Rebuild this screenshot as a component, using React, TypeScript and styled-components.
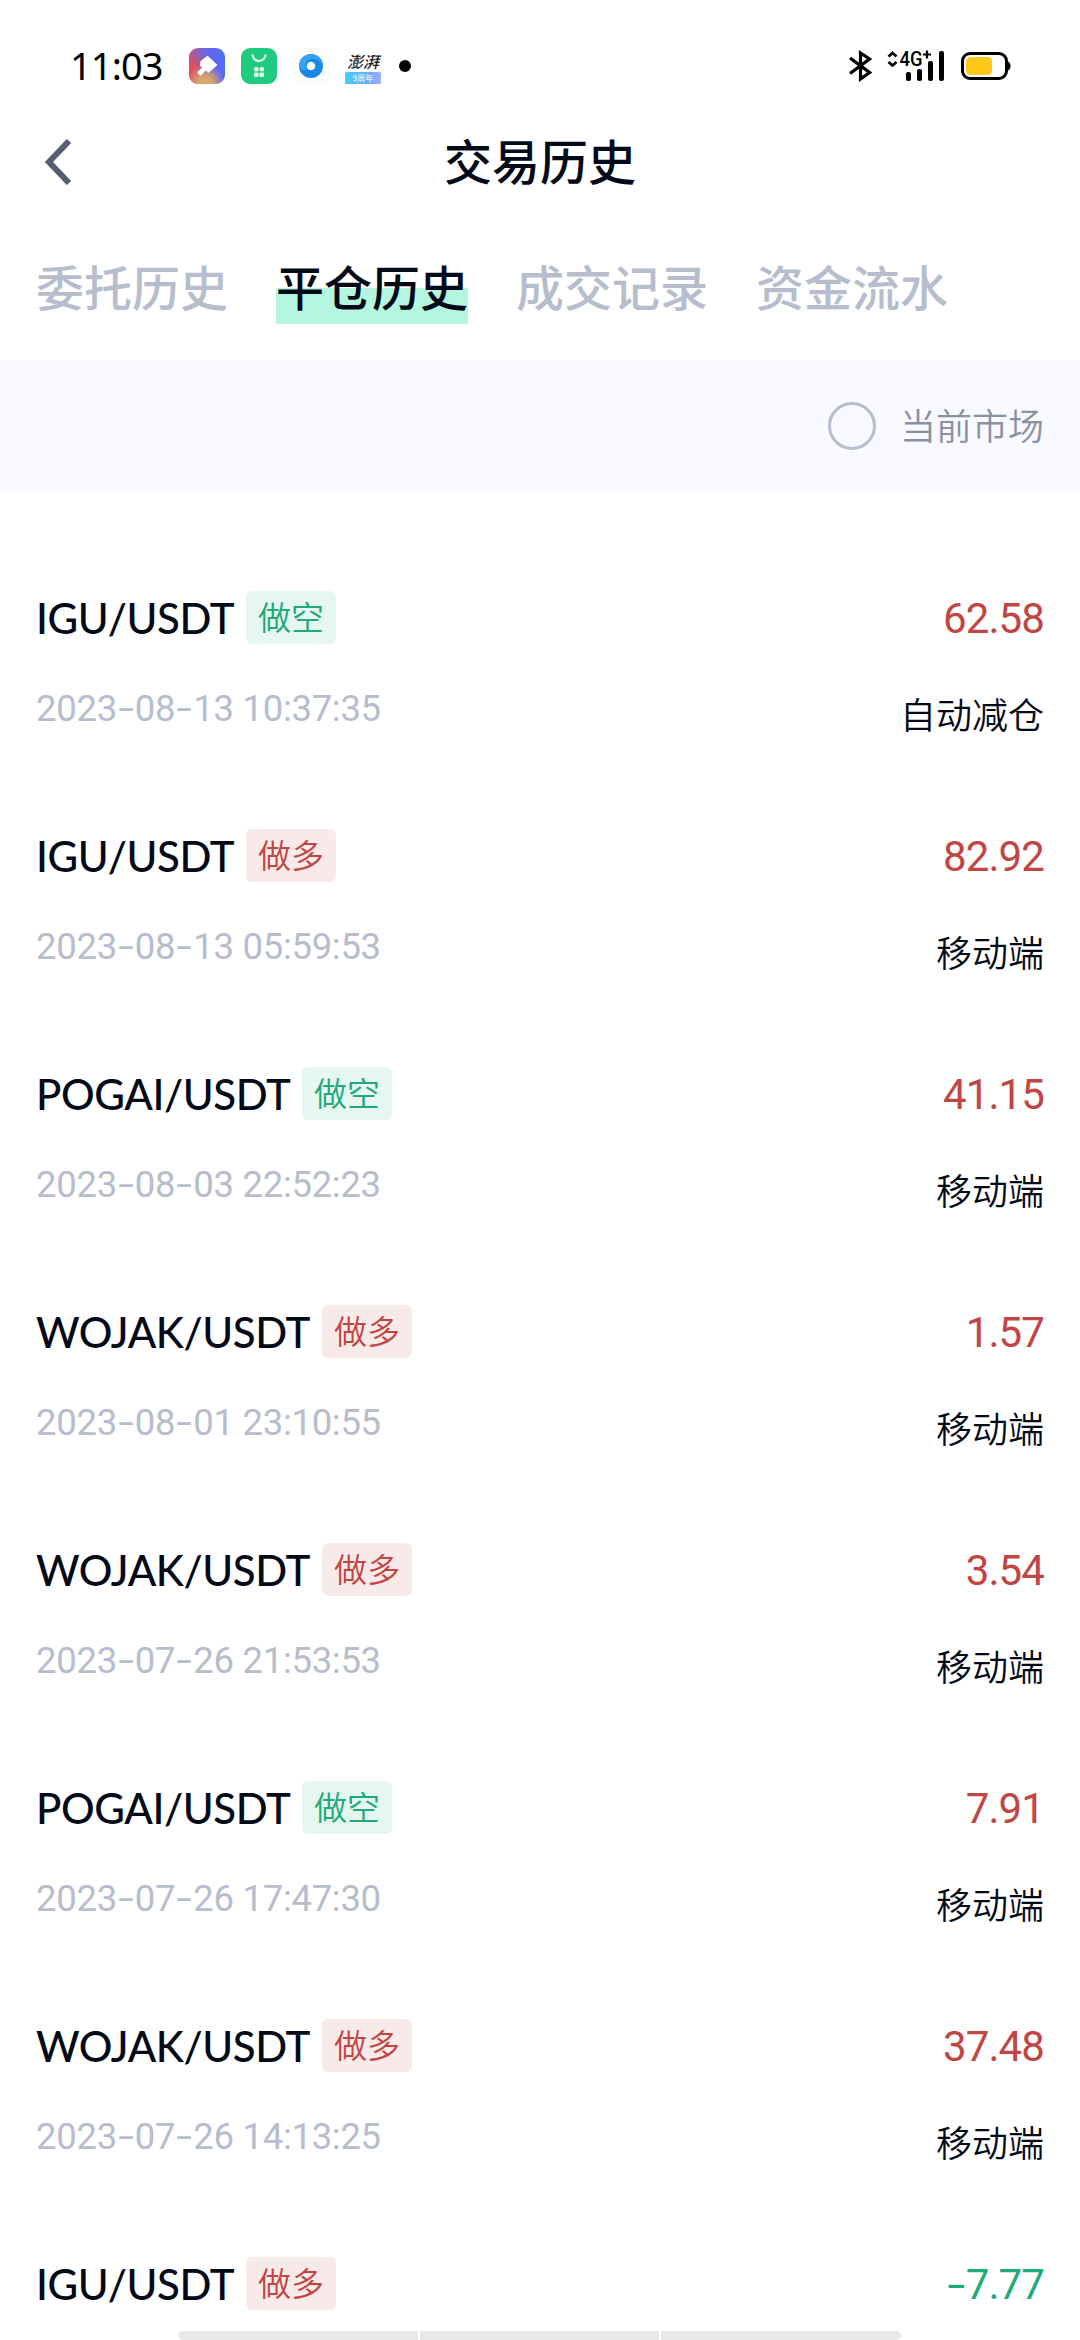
import React from "react";
import styled, { createGlobalStyle } from "styled-components";

const cjk = `"Noto Sans CJK SC", sans-serif`;

const GlobalStyle = createGlobalStyle`
  *, *::before, *::after { box-sizing: border-box; }
  html, body { margin: 0; background: #fff; }
  body { overflow: hidden; }
`;

const Screen = styled.div`
  position: relative;
  width: 1080px;
  height: 2340px;
  overflow: hidden;
  display: flex;
  flex-direction: column;
  background: #fff;
  color: #050a18;
  font-family: ${cjk};
`;

const StatusBar = styled.header`
  flex: none;
  display: flex;
  align-items: center;
  justify-content: space-between;
  height: 108px;
  padding: 24px 69px 0 70px;
`;

const StatusGroup = styled.div<{ $gap: number }>`
  display: flex;
  align-items: center;
  gap: ${(p) => p.$gap}px;
`;

const Clock = styled.span`
  width: 103px;
  padding-bottom: 3px;
  font: 400 38px/44px "Noto Sans", sans-serif;
  letter-spacing: -0.9px;
  color: #000;
  white-space: nowrap;
`;

const Dot = styled.span`
  width: 12px;
  height: 12px;
  margin-left: 2px;
  border-radius: 50%;
  background: #000;
`;

const PaperIcon = styled.span`
  display: flex;
  flex-direction: column;
  width: 36px;
  height: 36px;
  font-family: ${cjk};
  text-align: center;
`;

const PaperName = styled.span`
  height: 24px;
  font: italic 500 16px/27px ${cjk};
  color: #222;
  white-space: nowrap;
`;

const PaperBadge = styled.span`
  height: 12px;
  border-radius: 2px 2px 0 0;
  font-size: 8px;
  line-height: 12px;
  color: #fff;
  background: linear-gradient(100deg, #42d0f6, #67aef8 60%, #a5b0f8);
`;

const NavBar = styled.nav`
  flex: none;
  display: grid;
  grid-template-columns: 100px 1fr 100px;
  align-items: center;
  height: 108px;
`;

const BackButton = styled.button`
  display: flex;
  padding: 0 0 0 44px;
  border: 0;
  background: none;
`;

const Title = styled.h1`
  margin: 0;
  padding-bottom: 6px;
  font-size: 48px;
  font-weight: 500;
  line-height: 72px;
  text-align: center;
`;

const Tabs = styled.div`
  flex: none;
  display: flex;
  gap: 48px;
  height: 144px;
  padding: 36px 36px 0;
`;

const Tab = styled.span<{ $active?: boolean }>`
  height: 72px;
  font-size: 48px;
  font-weight: 500;
  line-height: 66px;
  color: ${(p) => (p.$active ? "#050a18" : "#b7bdcc")};
  background: ${(p) => (p.$active ? "linear-gradient(#b5f6e0, #b5f6e0) 0 100% / 100% 36px no-repeat" : "none")};
`;

const FilterBar = styled.div`
  flex: none;
  display: flex;
  align-items: center;
  justify-content: flex-end;
  gap: 24px;
  height: 132px;
  padding-right: 36px;
  background: #f8faff;
`;

const FilterLabel = styled.span`
  padding-bottom: 5px;
  color: #8b90a3;
  font-size: 36px;
  font-weight: 350;
  line-height: 54px;
`;

const Radio = styled.span`
  width: 48px;
  height: 48px;
  border: 3px solid #b7bdcc;
  border-radius: 50%;
`;

const List = styled.main`
  flex: 1;
  min-height: 0;
  padding: 99px 36px 0;
  overflow: hidden;
`;

const Row = styled.article`
  display: flex;
  flex-direction: column;
  height: 238px;
`;

const Line = styled.div<{ $height: number }>`
  display: flex;
  align-items: center;
  justify-content: space-between;
  height: ${(p) => p.$height}px;
`;

const PairGroup = styled.div`
  display: flex;
  align-items: center;
`;

const Pair = styled.span<{ $width: number }>`
  width: ${(p) => p.$width}px;
  margin-right: 12px;
  padding-top: 2px;
  font: 500 42px/53px Lato, sans-serif;
  letter-spacing: -0.4px;
  white-space: nowrap;
`;

const Tag = styled.span<{ $long: boolean }>`
  height: 53px;
  padding: 0 12px;
  border-radius: 6px;
  font-size: 33px;
  font-weight: 350;
  line-height: 51px;
  color: ${(p) => (p.$long ? "#c14543" : "#20a97b")};
  background: ${(p) => (p.$long ? "#f9eaea" : "#e6f6f1")};
`;

const Amount = styled.span<{ $loss: boolean }>`
  padding-top: 1px;
  font: 400 42px/53px Roboto, sans-serif;
  letter-spacing: -0.9px;
  color: ${(p) => (p.$loss ? "#20a97b" : "#c14543")};
`;

const Time = styled.time`
  font: 400 36.5px/44px Roboto, sans-serif;
  letter-spacing: -0.3px;
  color: #b7bdcc;
  white-space: pre;
`;

const Dash = styled.span<{ $width: number }>`
  display: inline-block;
  width: ${(p) => p.$width}px;
  letter-spacing: 0;
  text-align: center;
  transform: scaleX(1.55);
`;

const Source = styled.span`
  padding-top: 8px;
  font-size: 36px;
  font-weight: 350;
  line-height: 54px;
`;

const GestureBar = styled.div`
  position: absolute;
  left: 178px;
  bottom: 0;
  display: flex;
  gap: 2px;
  width: 723px;
  height: 9px;
  border-radius: 5px;
  overflow: hidden;
`;

const GestureSegment = styled.span`
  flex: 1;
  background: #e8e8e8;
`;

type Trade = { pair: string; long: boolean; amount: string; time: string; source: string };

const trades: Trade[] = [
  { pair: "IGU/USDT", long: false, amount: "62.58", time: "2023-08-13 10:37:35", source: "自动减仓" },
  { pair: "IGU/USDT", long: true, amount: "82.92", time: "2023-08-13 05:59:53", source: "移动端" },
  { pair: "POGAI/USDT", long: false, amount: "41.15", time: "2023-08-03 22:52:23", source: "移动端" },
  { pair: "WOJAK/USDT", long: true, amount: "1.57", time: "2023-08-01 23:10:55", source: "移动端" },
  { pair: "WOJAK/USDT", long: true, amount: "3.54", time: "2023-07-26 21:53:53", source: "移动端" },
  { pair: "POGAI/USDT", long: false, amount: "7.91", time: "2023-07-26 17:47:30", source: "移动端" },
  { pair: "WOJAK/USDT", long: true, amount: "37.48", time: "2023-07-26 14:13:25", source: "移动端" },
  { pair: "IGU/USDT", long: true, amount: "-7.77", time: "", source: "" },
];

const pairWidths: Record<string, number> = {
  "IGU/USDT": 198,
  "POGAI/USDT": 254,
  "WOJAK/USDT": 274,
};

const withDashes = (text: string, width: number) =>
  text.split("-").map((part, i) => (
    <React.Fragment key={i}>
      {i > 0 && <Dash $width={width}>-</Dash>}
      {part}
    </React.Fragment>
  ));

const ThemeAppIcon = () => (
  <svg width="36" height="36" viewBox="0 0 36 36">
    <defs>
      <linearGradient id="th" x1="0" y1="0.3" x2="1" y2="0.2">
        <stop offset="0" stopColor="#b8588c" />
        <stop offset="0.5" stopColor="#6a66e8" />
        <stop offset="1" stopColor="#4f6cf8" />
      </linearGradient>
      <radialGradient id="thr" cx="0.05" cy="0.6" r="0.5">
        <stop offset="0" stopColor="#ee4a4a" />
        <stop offset="1" stopColor="#ee4a4a" stopOpacity="0" />
      </radialGradient>
      <radialGradient id="thy" cx="0.45" cy="1" r="0.55">
        <stop offset="0" stopColor="#dcb163" />
        <stop offset="0.4" stopColor="#d8a070" />
        <stop offset="1" stopColor="#d8a070" stopOpacity="0" />
      </radialGradient>
    </defs>
    <rect width="36" height="36" rx="9" fill="url(#th)" />
    <rect width="36" height="36" rx="9" fill="url(#thr)" />
    <rect width="36" height="36" rx="9" fill="url(#thy)" />
    <path d="M18.500 8.500L27.500 17L19.500 24L16.800 21.500L11.500 27L9 24.500L14 19.500L11.500 17.500L12 13.500Z" fill="#fff" stroke="#fff" strokeWidth="1.200" strokeLinejoin="round" />
  </svg>
);

const MarketAppIcon = () => (
  <svg width="36" height="36" viewBox="0 0 36 36">
    <rect width="36" height="36" rx="9" fill="#1fcb7f" />
    <path d="M11.500 6.500a6.500 6.500 0 0 0 13 0" fill="none" stroke="#e9fff4" strokeWidth="2.200" />
    <g fill="#e0fbee">
      <rect x="13" y="19" width="4.600" height="4.600" rx="1.800" />
      <rect x="18.500" y="19" width="4.600" height="4.600" rx="1.800" />
      <rect x="13" y="24.400" width="4.600" height="4.600" rx="1.200" />
      <rect x="18.500" y="24.400" width="4.600" height="4.600" rx="1.200" />
    </g>
  </svg>
);

const BrowserAppIcon = () => (
  <svg width="36" height="36" viewBox="0 0 36 36">
    <rect x="0.500" y="0.500" width="35" height="35" rx="8" fill="#fcfcfc" stroke="#f7f7f7" />
    <circle cx="18" cy="18" r="12" fill="#1787e8" />
    <path d="M6 18a12 12 0 0 1 24 0c-2-5-7-8-12-7s-7 6-4 11c-4 1-7-1-8-4z" fill="#3aa2f2" />
    <circle cx="18" cy="18" r="4.300" fill="#fff" />
  </svg>
);

const BluetoothIcon = () => (
  <svg width="24" height="32" viewBox="0 0 24 32" fill="none" stroke="#000" strokeWidth="3.200">
    <path d="M2 8L21.500 22.500L12.500 29V3L21.500 9L2 23.500" />
  </svg>
);

const SignalIcon = () => (
  <svg width="58" height="44" viewBox="0 -6 58 44">
    <path d="M1.500 6.500L5.500 3L9.500 6.500M1.500 12L5.500 15.500L9.500 12" fill="none" stroke="#000" strokeWidth="2.800" />
    <text x="12.500" y="16" fontFamily="Roboto, sans-serif" fontSize="20" fontWeight="500" textLength="23" lengthAdjust="spacingAndGlyphs">4G</text>
    <path d="M36 4.500h8M40 0.500v8" stroke="#000" strokeWidth="2.200" />
    <rect x="19" y="22" width="5" height="9" rx="2" />
    <rect x="30" y="19" width="5" height="12" rx="2" />
    <rect x="41" y="11" width="5" height="20" rx="2" />
    <rect x="52" y="1" width="5" height="30" rx="2" />
  </svg>
);

const BatteryIcon = () => (
  <svg width="51" height="30" viewBox="0 0 51 30">
    <rect x="2.500" y="2.500" width="44" height="25" rx="7.500" fill="#fff" stroke="#000" strokeWidth="3" />
    <path d="M47 10q3.500 1 3.500 5t-3.500 5z" />
    <rect x="6" y="6" width="26" height="18" rx="4.500" fill="#ffc91c" />
  </svg>
);

export default function App() {
  return (
    <Screen>
      <GlobalStyle />
      <StatusBar>
        <StatusGroup $gap={16}>
          <Clock>11:03</Clock>
          <ThemeAppIcon />
          <MarketAppIcon />
          <BrowserAppIcon />
          <PaperIcon>
            <PaperName>澎湃</PaperName>
            <PaperBadge>9周年</PaperBadge>
          </PaperIcon>
          <Dot />
        </StatusGroup>
        <StatusGroup $gap={15}>
          <BluetoothIcon />
          <SignalIcon />
          <BatteryIcon />
        </StatusGroup>
      </StatusBar>
      <NavBar>
        <BackButton aria-label="返回">
          <svg width="28" height="46" viewBox="0 0 28 46">
            <path d="M25 2L5 23L25 44" fill="none" stroke="#585e72" strokeWidth="6" />
          </svg>
        </BackButton>
        <Title>交易历史</Title>
      </NavBar>
      <Tabs>
        <Tab>委托历史</Tab>
        <Tab $active>平仓历史</Tab>
        <Tab>成交记录</Tab>
        <Tab>资金流水</Tab>
      </Tabs>
      <FilterBar>
        <Radio />
        <FilterLabel>当前市场</FilterLabel>
      </FilterBar>
      <List>
        {trades.map((t, i) => (
          <Row key={i}>
            <Line $height={53}>
              <PairGroup>
                <Pair $width={pairWidths[t.pair]}>{t.pair}</Pair>
                <Tag $long={t.long}>{t.long ? "做多" : "做空"}</Tag>
              </PairGroup>
              <Amount $loss={t.amount.startsWith("-")}>{withDashes(t.amount, 19)}</Amount>
            </Line>
            {t.time && (
              <Line $height={129}>
                <Time>{withDashes(t.time, 18)}</Time>
                <Source>{t.source}</Source>
              </Line>
            )}
          </Row>
        ))}
      </List>
      <GestureBar>
        <GestureSegment />
        <GestureSegment />
        <GestureSegment />
      </GestureBar>
    </Screen>
  );
}
